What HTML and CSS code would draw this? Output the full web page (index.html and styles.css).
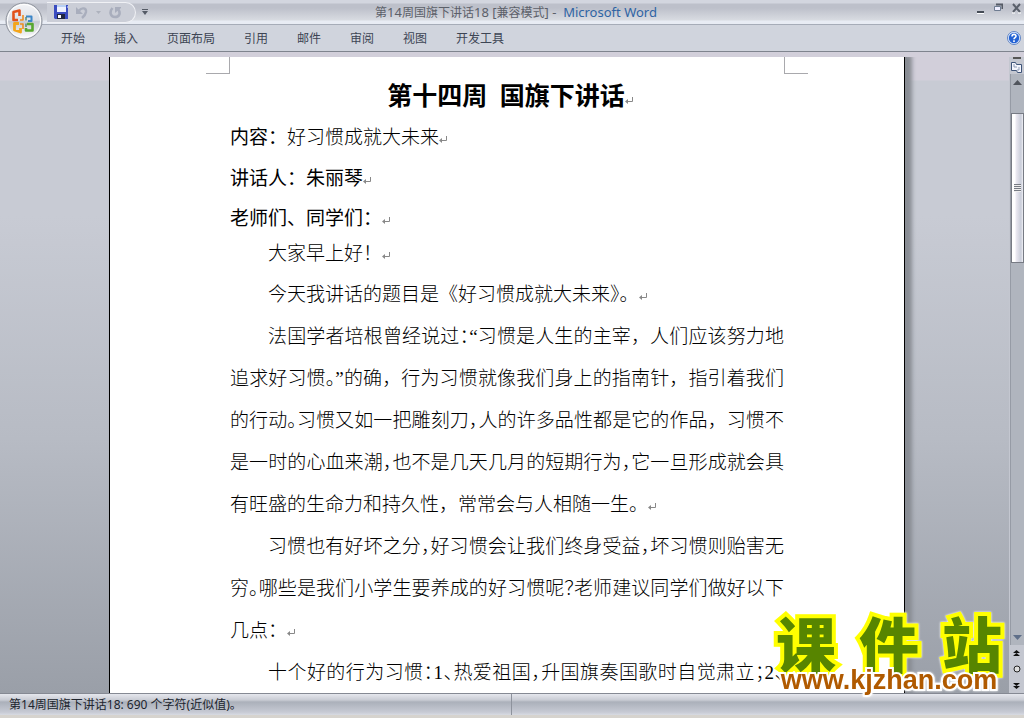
FILE: index.html
```html
<!DOCTYPE html>
<html lang="zh-CN">
<head>
<meta charset="utf-8">
<title>第14周国旗下讲话18 [兼容模式] - Microsoft Word</title>
<link rel="stylesheet" href="styles.css">
</head>
<body>
<svg class="defs" aria-hidden="true">
  <symbol id="mark" viewBox="0 0 8 8"><path d="M7.500 0v4.500H2" fill="none" stroke="#888"/><path d="M0 4.500 3 2v5z" fill="#888"/></symbol>
</svg>
<header class="ribbon">
  <div class="titlebar">
    <div class="quick">
      <button class="tool" aria-label="保存"><svg width="14" height="14" viewBox="0 0 14 14"><path d="M0 0h14v14H1L0 13z" fill="#3a4cc0"/><path d="M3 0h9v7H3z" fill="#eef2ff"/><path d="M3 0h9v2H3z" fill="#b8d0f4"/><path d="M3 9h8v5H3z" fill="#20263f"/><path d="M4 10h3v3H4z" fill="#fff"/><path d="M13 1h1v2h-1z" fill="#8fa0ee"/></svg></button>
      <button class="tool" aria-label="撤消"><svg width="12" height="13" viewBox="0 0 12 13"><path d="M3 4.500C6 1 10.500 2 10 6q-.5 3-4 6" fill="none" stroke="#a9aebd" stroke-width="2.400"/><path d="M0 1v7h7z" fill="#a9aebd"/></svg></button>
      <button class="tool small" aria-label="撤消列表"><svg width="5" height="3"><path d="M0 0h5L2.500 3z" fill="#adb2bd"/></svg></button>
      <button class="tool" aria-label="恢复"><svg width="13" height="13" viewBox="0 0 13 13"><path d="M3.500 2C0 6 1.500 11 6 11s6-4 3-8" fill="none" stroke="#a9aebd" stroke-width="2.600"/><path d="M6 1h6v1L6 7z" fill="#a9aebd"/></svg></button>
    </div>
    <button class="more" aria-label="自定义快速访问工具栏"><svg width="6" height="6"><path d="M0 0h6v1H0zM0 2h6L3 6z" fill="#555b66"/></svg></button>
    <h1 class="caption">第<span class="num">14</span>周国旗下讲话<span class="num">18 [</span>兼容模式<span class="num">] - <span class="app">&nbsp;Microsoft Word</span></span></h1>
    <div class="window-buttons">
      <button aria-label="最小化"><svg width="9" height="12"><path d="M1 9h7v2H1z" fill="#444b55"/><path d="M1 11h7v1H1z" fill="#fff"/></svg></button>
      <button aria-label="还原"><svg width="9" height="12"><path d="M2 2.500h6.500V7" fill="none" stroke="#555b66" stroke-width="2"/><path d="M.5 4.500h6v4h-6z" fill="#eef" stroke="#6e7c91"/></svg></button>
      <button aria-label="关闭"><svg width="9" height="12"><path d="m1 2 7 8M8 2 1 10" stroke="#5a606b" stroke-width="2"/><path d="M0 11h3M6 11h3" stroke="#fff"/></svg></button>
    </div>
  </div>
  <nav class="tabs">
    <button>开始</button><button>插入</button><button>页面布局</button><button>引用</button><button>邮件</button><button>审阅</button><button>视图</button><button>开发工具</button>
    <button class="help" aria-label="帮助"><svg width="14" height="14" viewBox="0 0 14 14"><circle cx="7" cy="7" r="6.500" fill="#e6effc" stroke="#5f84c4"/><circle cx="7" cy="7" r="5.200" fill="#2463d4"/><path d="M5 5.500C5 2.500 9.200 2.800 9 5.200 8.900 6.600 7 6.500 7 8.200M7 9.300V11" fill="none" stroke="#fff" stroke-width="1.600"/></svg></button>
  </nav>
  <button class="office" aria-label="Office 按钮">
    <svg width="38" height="38" viewBox="0 0 38 38">
      <defs><linearGradient id="orb" x2="0" y2="1"><stop offset="0" stop-color="#f4f5f8"/><stop offset=".48" stop-color="#dcdfe5"/><stop offset=".52" stop-color="#c6cad2"/><stop offset="1" stop-color="#fff"/></linearGradient></defs>
      <circle cx="19" cy="19" r="18" fill="url(#orb)" stroke="#8d929c"/>
      <circle cx="19" cy="19" r="16.500" fill="none" stroke="#fff"/>
      <g fill="none" stroke-linejoin="round">
        <path d="M13 18H8.500V10l6-1.500V14" stroke="#e2501b" stroke-width="2.600"/>
        <path d="M21 14.500h5.500V19H23" stroke="#3b86c8" stroke-width="2"/>
        <path d="M14 21.500H9.500V28l6 2v-4" stroke="#f3a51b" stroke-width="2.800"/>
        <path d="M22 22h5.500v6.500H21V26" stroke="#58a72f" stroke-width="2.600"/>
        <path d="M15 18h3v-5M15 22h3v5" stroke="#ed8d21" stroke-width="1.600"/>
        <path d="M21 18.500V15M21 21.500V25" stroke="#4b8670" stroke-width="1.400"/>
      </g>
    </svg>
  </button>
</header>
<main class="workspace">
  <div class="canvas">
    <article class="page">
      <div class="crops"><i class="crop left"></i><i class="crop right"></i></div>
      <h2 class="heading">第十四周&nbsp; 国旗下讲话<svg class="mark"><use href="#mark"/></svg></h2>
      <p class="lead"><span class="strong">内容：</span>好习惯成就大未来<svg class="mark"><use href="#mark"/></svg></p>
      <p class="lead"><span class="strong">讲话人：朱丽琴</span><svg class="mark"><use href="#mark"/></svg></p>
      <p class="lead greet"><span class="strong">老师们、同学们：</span><svg class="mark"><use href="#mark"/></svg></p>
      <p class="opening">大家早上好！<svg class="mark"><use href="#mark"/></svg></p>
      <p>今天我讲话的题目是《好习惯成就大未来<span class="half">》</span>。<svg class="mark"><use href="#mark"/></svg></p>
      <p><span class="line">法国学者培根曾经说过<span class="half">：</span>“习惯是人生的主宰，人们应该努力地</span>
        <span class="line">追求好习惯<span class="half">。</span>”的确，行为习惯就像我们身上的指南针，指引着我们</span>
        <span class="line">的行动<span class="half">。</span>习惯又如一把雕刻刀<span class="half">，</span>人的许多品性都是它的作品，习惯不</span>
        <span class="line">是一时的心血来潮<span class="half">，</span>也不是几天几月的短期行为<span class="half">，</span>它一旦形成就会具</span>
        有旺盛的生命力和持久性，常常会与人相随一生。<svg class="mark"><use href="#mark"/></svg></p>
      <p><span class="line">习惯也有好坏之分<span class="half">，</span>好习惯会让我们终身受益<span class="half">，</span>坏习惯则贻害无</span>
        <span class="line">穷<span class="half">。</span>哪些是我们小学生要养成的好习惯呢<span class="half">？</span>老师建议同学们做好以下</span>
        几点：<svg class="mark"><use href="#mark"/></svg></p>
      <p><span class="line">十个好的行为习惯<span class="half">：</span>1<span class="half">、</span>热爱祖国<span class="half">，</span>升国旗奏国歌时自觉肃立<span class="half">；</span>2<span class="half">、</span></span></p>
    </article>
  </div>
  <div class="scroll">
    <div class="split"></div>
    <button class="ruler" aria-label="标尺"><svg width="13" height="13" viewBox="0 0 13 13"><path d="M1.500 1.500h4l1 2h5v8h-4l-1-2h-5z" fill="#f4f5fc" stroke="#3f5579"/><path d="M4 3v3h3M9 6v3H7" fill="none" stroke="#8c9ab5"/></svg></button>
    <div class="track">
      <button class="arrow" aria-label="向上滚动"><svg width="9" height="5"><path d="M0 5 4.500 0 9 5z" fill="#50545c"/></svg></button>
      <div class="thumb"><i class="grip"></i></div>
      <button class="arrow down" aria-label="向下滚动"><svg width="9" height="5"><path d="M0 0h9L4.500 5z" fill="#5f6f89"/></svg></button>
    </div>
    <button class="browse" aria-label="前一页"><svg width="7" height="7"><path d="M0 3 3.500 0 7 3zM0 6l3.500-3L7 6z" fill="#111"/></svg></button>
    <button class="browse" aria-label="选择浏览对象"><svg width="8" height="8"><circle cx="4" cy="4" r="3" fill="#ddd" stroke="#222"/></svg></button>
    <button class="browse" aria-label="下一页"><svg width="7" height="7"><path d="M0 1h7L3.500 4zM0 4h7L3.500 7z" fill="#111"/></svg></button>
  </div>
</main>
<footer class="status"><span class="count">第<span class="num">14</span>周国旗下讲话<span class="num">18: 690 </span>个字符<span class="num">(</span>近似值<span class="num">)</span>。</span></footer>
<div class="watermark"><div class="brand">课件站</div><div class="url">www.kjzhan.com</div></div>
</body>
</html>
```
FILE: styles.css
```css
* { box-sizing: border-box; }
body {
  margin: 0;
  height: 100vh;
  display: flex;
  flex-direction: column;
  overflow: hidden;
  position: relative;
  font: 12px/16px "Noto Sans CJK SC", sans-serif;
  color: #3d4554;
  background: #d6d3ce;
}
button { margin: 0; padding: 0; border: 0; background: none; font: inherit; color: inherit; }
svg { display: block; }
.defs { position: absolute; width: 0; height: 0; }
.num { font-family: "Noto Sans", sans-serif; }

.ribbon { position: relative; flex: none; border-bottom: 1px solid #7f848e; }
.titlebar {
  height: 25px;
  display: flex;
  align-items: center;
  padding-left: 47px;
  border-bottom: 1px solid #a6acb8;
  background: linear-gradient(#d3d6df 0 3px, #bdc0ca 4px 8px, #c6c9d2 12px, #d8dbe1 20px, #e8ecf4 21px);
}
.quick {
  display: flex;
  align-items: center;
  gap: 8px;
  height: 21px;
  width: 89px;
  padding-left: 7px;
  border: 1px solid #f0f1f5;
  border-left: 0;
  border-radius: 0 11px 11px 0;
  background: #cbced7;
}
.more { margin-left: 6px; }
.caption {
  flex: 1;
  margin: 0;
  padding-right: 92px;
  text-align: center;
  font-size: 12px;
  font-weight: 400;
  color: #5c6069;
}
.caption .num { font-size: 13px; }
.app { color: #2f64a4; }
.window-buttons { display: flex; gap: 9px; padding-right: 3px; padding-bottom: 8px; }
.tabs { display: flex; align-items: center; gap: 1px; height: 26px; padding-left: 47px; background: #d0d4dd; }
.tabs button { padding: 0 14px; height: 26px; }
.tabs .help { margin-left: auto; padding: 0 3px; }
.office { position: absolute; left: 5px; top: 2px; }

.workspace { flex: 1; min-height: 0; display: flex; padding-top: 5px; background: #d2cfda; }
.canvas {
  flex: 1;
  min-width: 0;
  overflow: hidden;
  display: flex;
  justify-content: center;
  padding-left: 5px;
  background: linear-gradient(#d2cfda 0 23px, #c8cbd4 24px 25%, #b7bbc4 60%, #9a9fa8);
}
.page {
  flex: 0 1 796px;
  height: 100%;
  padding: 0 120px;
  overflow: hidden;
  border: solid #000;
  border-width: 0 1px;
  background: #fff;
  box-shadow: 2px 0 0 #888c93, 5px 0 4px 2px #888c93;
  font: 19px/42px "Liberation Serif", "Noto Sans CJK SC", serif;
  font-weight: 300;
  color: #000;
}
.crops { display: flex; justify-content: space-between; height: 17px; margin: 0 -24px; }
.crop { width: 24px; border-bottom: 1px solid #a9a9ad; }
.crop.left { border-right: 1px solid #a9a9ad; }
.crop.right { border-left: 1px solid #a9a9ad; }
.heading { margin: 3px 0 0; padding-left: 6px; font-size: 25px; line-height: 40px; font-weight: 700; text-align: center; }
.page p { margin: 0; text-indent: 38px; }
.page .lead { text-indent: 0; line-height: 41px; }
.page .greet { line-height: 40px; }
.page .opening { line-height: 30px; padding-bottom: 5px; }
.strong { font-weight: 400; }
.line { display: block; text-align-last: justify; white-space: nowrap; }
.line + .line { text-indent: 0; }
.half { font-feature-settings: "halt"; }
.mark { display: inline-block; width: 8px; height: 8px; }

.scroll { width: 15px; display: flex; flex-direction: column; align-items: center; background: #c4c7d0; }
.split { flex: none; width: 8px; height: 2px; margin-bottom: 2px; background: #555; }
.track { flex: 1; width: 14px; display: flex; flex-direction: column; align-items: center; background: #b0b5be; border-left: 1px solid #969ba5; }
.arrow { padding: 6px 0; }
.thumb {
  width: 13px;
  height: 150px;
  margin-top: 22px;
  padding-top: 70px;
  border: 1px solid #777b84;
  background: linear-gradient(90deg, #fff 0 3px, #eceaf2 4px, #c9cdd9 9px, #f0f0f5);
}
.grip { display: block; height: 8px; margin: 0 2px; background: repeating-linear-gradient(#777b84 0 1px, #eee 1px 2px); }
.arrow.down { margin-top: auto; padding-bottom: 5px; }
.browse { height: 16px; }

.status {
  flex: none;
  height: 22px;
  margin-bottom: 3px;
  display: flex;
  border-top: 1px solid #858993;
  background: linear-gradient(#e5e7ed, #c9ccd4 6px, #abb0ba 8px, #c6c9d3 18px, #d7dae2);
  color: #20252e;
}
.count { width: 50%; padding: 2px 9px; border-right: 1px solid #8e939d; }

.watermark { position: absolute; right: 22px; bottom: 26px; width: 226px; filter: drop-shadow(0 0 1px #fff); }
.brand {
  font: 900 60px/52px "Noto Sans CJK SC", sans-serif;
  text-align-last: justify;
  color: #578500;
  paint-order: stroke fill;
  -webkit-text-stroke: 8px #ffff00;
}
.url {
  font: 700 27px/24px "Liberation Sans", sans-serif;
  text-align: center;
  color: #b05a00;
  paint-order: stroke fill;
  -webkit-text-stroke: 4px #fff;
}
```
